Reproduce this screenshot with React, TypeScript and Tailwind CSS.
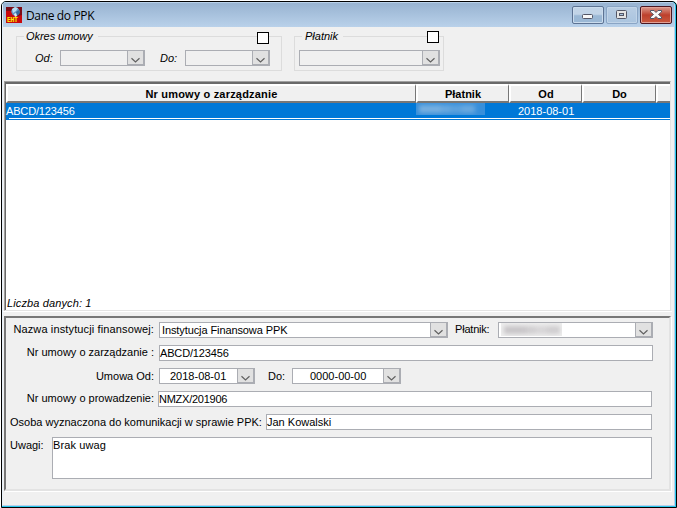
import type { ReactNode } from "react";
import clsx from "clsx";

interface ComboProps {
	className: string;
	disabled?: boolean;
	children?: ReactNode;
}

function Combo({ className, disabled, children }: ComboProps) {
	return (
		<div
			className={clsx(
				"flex h-4 shrink-0 border border-[#abadb3] leading-[15px]",
				disabled ? "bg-[#f0f0f0]" : "bg-white",
				className
			)}
		>
			<div className="flex-1">{children}</div>
			<div className="h-4 w-[18px] -mt-px -mr-px border border-r-2 border-b-2 border-[#abadb3] bg-[#e1e1e1]">
				<svg width="15" height="13" viewBox="0 0 15 13" fill="none">
					<path d="M3.500 7.2L7.5 10.900L11.500 7.2" stroke="#606060" strokeWidth="1.2" />
				</svg>
			</div>
		</div>
	);
}

interface FieldProps {
	className: string;
	children: ReactNode;
}

function Field({ className, children }: FieldProps) {
	return (
		<div className={clsx("shrink-0 border border-[#abadb3] bg-white leading-[15px]", className)}>
			{children}
		</div>
	);
}

interface FilterGroupProps {
	className: string;
	title: string;
	titleClassName: string;
	checkClassName: string;
	children: ReactNode;
}

function FilterGroup({ className, title, titleClassName, checkClassName, children }: FilterGroupProps) {
	return (
		<div className={clsx("relative h-[35px] border border-[#dcdcdc] pt-[13px] flex items-start", className)}>
			<span className={clsx("absolute -top-[9px] left-[7px] h-4 bg-[#f0f0f0] pl-[2px] pr-[5px] leading-4", titleClassName)}>
				{title}
			</span>
			<span className={clsx("absolute size-3 border border-black bg-white", checkClassName)} />
			{children}
		</div>
	);
}

function AppIcon() {
	return (
		<svg className="mt-[4px] ml-[2px] size-4 shrink-0" viewBox="0 0 16 16">
			<rect width="16" height="16" fill="#7c0b16" />
			<path d="M0 4h5l2 3 5 2 4-1v8H0z" fill="#c8090d" />
			<circle cx="9.5" cy="4.6" r="4.2" fill="#6497c7" />
			<path d="M6 2l3-2 3 1-2 3-3 2z" fill="#b7ddf2" />
			<path d="M10 5l3-2 1 3-3 3z" fill="#356a9d" />
			<path d="M8 7l2-1 1 3-2 1z" fill="#dceaf3" />
			<text x="1" y="14.5" fontFamily="Liberation Mono" fontWeight="bold" fontSize="6.5" textLength="11" fill="#ffef00">
				EHT
			</text>
		</svg>
	);
}

function WindowButtons() {
	return (
		<div className="ml-auto mt-[3px] mr-[2px] flex gap-[2px]">
			<div className="h-[18px] w-8 rounded-[2px] border border-[#5d7393] bg-linear-to-b from-[#c2d4e7] from-45% to-[#9bb8d5] to-55% shadow-[inset_0_0_0_1px_#cbdced]">
				<svg width="30" height="16" viewBox="0 0 30 16">
					<rect x="9.5" y="7.5" width="10" height="4" rx="1" fill="#f8f8f8" stroke="#535666" />
				</svg>
			</div>
			<div className="h-[18px] w-8 rounded-[2px] border border-[#8aa5c5] bg-linear-to-b from-[#b9cde3] to-[#aac4df] shadow-[inset_0_0_0_1px_#c1d4e8]">
				<svg width="30" height="16" viewBox="0 0 30 16">
					<rect x="9.5" y="3.5" width="10" height="8" rx="1" fill="#e4e4e4" stroke="#535666" />
					<rect x="12.5" y="6.5" width="4" height="2" fill="#a8c3df" stroke="#535666" />
				</svg>
			</div>
			<div className="h-[18px] w-8 rounded-[2px] border border-[#4b1621] bg-linear-to-b from-[#d9988d] from-0% via-[#bd3f2c] via-50% to-[#c95a40] shadow-[inset_0_0_0_1px_#e2a196]">
				<svg width="30" height="16" viewBox="0 0 30 16">
					<path
						d="M9.500 3.500h3.500l2 2 2-2h3.500v1.500L17.500 7.500l3 2.500v1.500h-3.500l-2-2-2 2h-3.500V10l3-2.500L9.500 5z"
						fill="#f8f8f8"
						stroke="#535666"
					/>
				</svg>
			</div>
		</div>
	);
}

function HiddenText({ className }: { className: string }) {
	return (
		<div className={clsx("overflow-hidden", className)}>
			<div className="flex h-full items-center blur-[2px]">
				<span className="ml-[3px] h-2 w-[22px] bg-current" />
				<span className="h-2 w-[9px] bg-current opacity-80" />
				<span className="h-2 w-[12px] bg-current opacity-60" />
				<span className="h-2 w-[13px] bg-current opacity-80" />
			</div>
		</div>
	);
}

const headerCell =
	"h-[19px] border-t-2 border-l-2 border-t-white border-l-white border-b-2 border-b-[#777] border-r border-r-[#777] text-center leading-[17px]";

export default function App() {
	return (
		<div className="h-[508px] w-[677px] overflow-hidden bg-white pt-px pl-px font-['Liberation_Sans',Arial,sans-serif] text-[11px] whitespace-nowrap text-black">
			<div className="h-[507px] w-[676px] rounded-t-[5px] border border-black bg-[#26c6ec] pr-px pb-px">
				<div className="h-[504px] w-[673px] rounded-t-[4px] border border-[#b9d1ea] border-l-[#e6eff8] bg-[#f0f0f0]">
					{/* Title bar */}
					<div className="flex h-6 bg-linear-to-b from-[#98b3d1] to-[#b9d1ea] pl-px">
						<AppIcon />
						<span className="ml-[4px] mt-[4px] font-['Open_Sans',sans-serif] text-[12px] leading-[18px] tracking-[-0.35px]">
							Dane do PPK
						</span>
						<WindowButtons />
					</div>

					{/* Filters */}
					<div className="flex h-[54px] pt-[9px] pl-[13px]">
						<FilterGroup
							className="w-[266px] pl-[18px]"
							title="Okres umowy"
							titleClassName="italic tracking-[-0.05px]"
							checkClassName="left-[240px] -top-[5px]"
						>
							<span className="w-[25px] italic leading-4">Od:</span>
							<Combo className="w-[85px]" disabled />
							<span className="ml-[15px] w-[25px] italic leading-4">Do:</span>
							<Combo className="w-[85px]" disabled />
						</FilterGroup>
						<FilterGroup
							className="ml-3 w-[150px] pl-1"
							title="Płatnik"
							titleClassName="italic pl-[3px]"
							checkClassName="left-[132px] -top-[6px]"
						>
							<Combo className="w-[141px]" disabled />
						</FilterGroup>
					</div>

					{/* Contracts table */}
					<div className="ml-px h-[230px] w-[667px] border-t border-l border-r border-b border-t-[#a0a0a0] border-l-[#a0a0a0] border-r-[#e3e3e3] border-b-[#e3e3e3]">
						<div className="h-[228px] border-t-2 border-l border-[#696969] bg-white">
							<div className="flex bg-[#f0f0f0] text-[11px] font-bold">
								<div className={clsx(headerCell, "w-[410px] tracking-[0.2px]")}>Nr umowy o zarządzanie</div>
								<div className={clsx(headerCell, "w-[93px]")}>Płatnik</div>
								<div className={clsx(headerCell, "w-[73px]")}>Od</div>
								<div className={clsx(headerCell, "w-[74px]")}>Do</div>
								<div className={clsx(headerCell, "flex-1 border-r-0")} />
							</div>
							<div className="h-[17px] bg-[#0078d7] text-white">
								<div className="flex h-[15px]">
									<span className="w-[410px] leading-4 tracking-[-0.15px]">ABCD/123456</span>
									<HiddenText className="h-3 w-[69px] bg-[#378fdb] text-[#76afe0]" />
									<span className="ml-[33px] leading-4">2018-08-01</span>
								</div>
								<div className="ml-[3px] h-px bg-white" />
							</div>
							<div className="mt-[176px] pl-px italic leading-[15px] tracking-[0.12px]">Liczba danych: 1</div>
						</div>
					</div>
					<div className="h-px w-[669px] bg-white" />

					{/* Contract details */}
					<div className="mt-1 ml-px h-[175px] w-[667px] border-2 border-t-[#777] border-l-[#777] border-r-[#e3e3e3] border-b-[#e3e3e3] shadow-[1px_1px_0_white] leading-[14px]">
						<div className="flex h-[23px] pt-1">
							<span className="w-[153px] pr-[5px] text-right tracking-[0.13px]">Nazwa instytucji finansowej:</span>
							<Combo className="w-[289px]">
								<span className="pl-[2px] tracking-[-0.1px]">Instytucja Finansowa PPK</span>
							</Combo>
							<span className="ml-[7px] w-[43px] tracking-[-0.2px]">Płatnik:</span>
							<Combo className="w-[155px]">
								<HiddenText className="ml-[2px] h-[13px] w-[61px] bg-[#eee] text-[#c8c5c8]" />
							</Combo>
						</div>
						<div className="flex h-[23px] pt-1">
							<span className="w-[153px] pr-[5px] text-right">Nr umowy o zarządzanie :</span>
							<Field className="h-4 w-[494px] tracking-[-0.15px]">ABCD/123456</Field>
						</div>
						<div className="flex h-[23px] pt-1">
							<span className="w-[153px] pr-[5px] text-right leading-4">Umowa Od:</span>
							<Combo className="w-[96px]">
								<span className="pl-[10px]">2018-08-01</span>
							</Combo>
							<span className="ml-[13px] w-[24px] leading-4">Do:</span>
							<Combo className="w-[109px]">
								<span className="pl-[17px]">0000-00-00</span>
							</Combo>
						</div>
						<div className="flex h-[23px] pt-1">
							<span className="w-[152px] pr-[4px] text-right">Nr umowy o prowadzenie:</span>
							<Field className="h-4 w-[494px] tracking-[-0.25px]">NMZX/201906</Field>
						</div>
						<div className="flex h-[23px] pt-1">
							<span className="w-[260px] pl-1 leading-4">Osoba wyznaczona do komunikacji w sprawie PPK:</span>
							<Field className="h-4 w-[386px]">Jan Kowalski</Field>
						</div>
						<div className="flex pt-1">
							<span className="w-[46px] pl-1 leading-4">Uwagi:</span>
							<Field className="h-[42px] w-[600px] tracking-[0.1px]">Brak uwag</Field>
						</div>
					</div>
				</div>
			</div>
		</div>
	);
}
